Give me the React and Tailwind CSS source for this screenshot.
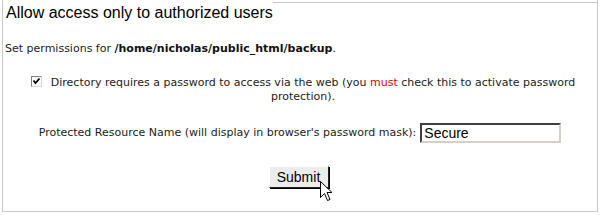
import React from "react";

const verdana = { fontFamily: "'DejaVu Sans', Verdana, sans-serif" };

const Cursor = () => (
  <svg
    className="absolute left-[51px] top-[15px] pointer-events-none"
    width="13"
    height="22"
    viewBox="0 0 13 22"
  >
    <path
      d="M0.5 0.5 L0.5 16.5 L4.5 12.5 L7.5 19.5 L10 18.5 L7 11.5 L12 11.5 Z"
      fill="#fff"
      stroke="#000"
      strokeWidth="1"
    />
  </svg>
);

export default function App() {
  return (
    <div className="w-[600px] h-[215px] bg-white relative overflow-hidden">
      <div className="mx-[2px] h-[212px] border-l border-r border-b border-[#c8c8c8] flex flex-col">
        {/* Title */}
        <div className="flex items-start">
          <h1 className="pl-[3px] pt-[3px] text-[16px] leading-[19px] text-black font-['Liberation_Sans',Arial,sans-serif]">
            Allow access only to authorized users
          </h1>
          <div className="flex-1 mt-[2px] border-t border-[#c8c8c8]" />
        </div>

        <p
          className="pl-[2px] mt-[20px] text-[11px] leading-[14px] text-[#222]"
          style={verdana}
        >
          Set permissions for{" "}
          <b className="font-bold text-[#111]">/home/nicholas/public_html/backup</b>.
        </p>

        {/* Checkbox row */}
        <div
          className="mt-[20px] pl-[24px] pr-[18px] text-center text-[11px] leading-[14px] text-[#222]"
          style={verdana}
        >
          <span className="inline-block align-[-1px] w-[11px] h-[11px] mr-[9px] border border-t-[#808080] border-l-[#808080] border-r-[#d8d8d8] border-b-[#d8d8d8] bg-white relative">
            <svg className="absolute left-0 top-0" width="9" height="9" viewBox="0 0 9 9">
              <path d="M1.5 3.5 L3.5 6 L7.5 1.5" fill="none" stroke="#000" strokeWidth="1.8" />
            </svg>
          </span>
          Directory requires a password to access via the web (you{" "}
          <span className="text-[#dd0000]">must</span> check this to activate
          password protection).
        </div>

        {/* Resource name */}
        <div
          className="mt-[19px] flex items-center justify-center gap-[4px] text-[11px] leading-[14px] text-[#222]"
          style={verdana}
        >
          <span>Protected Resource Name (will display in browser's password mask):</span>
          <input
            type="text"
            defaultValue="Secure"
            className="w-[141px] h-[20px] px-[2px] py-0 text-[14px] leading-[16px] text-black bg-white border-2 border-t-[#404040] border-l-[#404040] border-r-[#d4d0c8] border-b-[#d4d0c8] outline-none font-['Liberation_Sans',Arial,sans-serif]"
          />
        </div>

        {/* Submit */}
        <div className="mt-[23px] flex justify-center">
          <div className="relative ml-[-3px]">
            <button
              type="button"
              className="block w-[60px] h-[22px] bg-[#ececec] text-[14px] leading-[16px] text-black border border-t-white border-l-white border-r-[#222] border-b-[#222] shadow-[1px_1px_0_#000] font-['Liberation_Sans',Arial,sans-serif]"
            >
              Submit
            </button>
            <Cursor />
          </div>
        </div>
      </div>
    </div>
  );
}
